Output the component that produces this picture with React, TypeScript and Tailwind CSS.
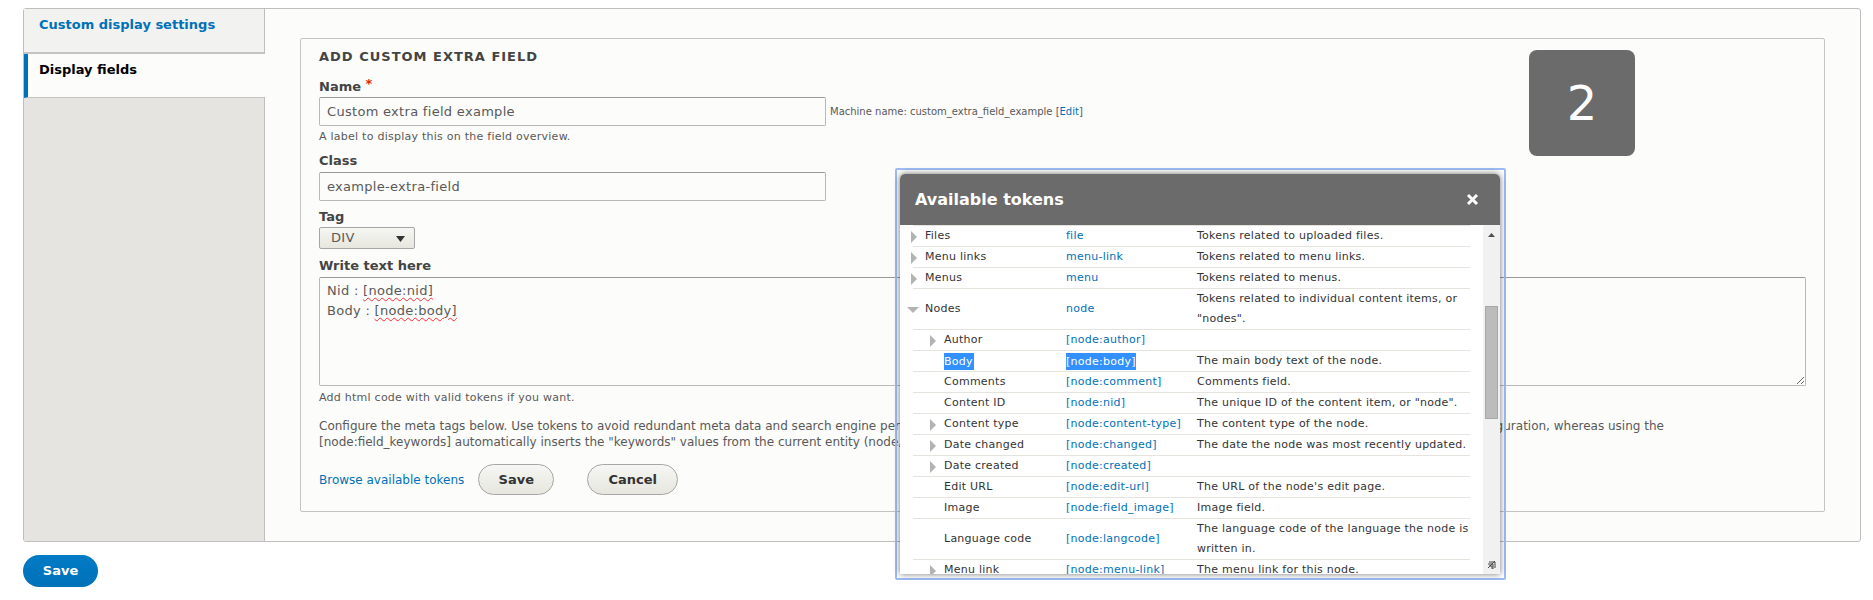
const FONT = 'font-["DejaVu_Sans",sans-serif]';

type TokenRow = {
  name: string;
  token: string;
  desc?: string;
  desc2?: string;
  nested?: boolean;
  arrow?: 'right' | 'down';
  selected?: boolean;
};

const rows: TokenRow[] = [
  { name: 'Files', token: 'file', desc: 'Tokens related to uploaded files.', arrow: 'right' },
  { name: 'Menu links', token: 'menu-link', desc: 'Tokens related to menu links.', arrow: 'right' },
  { name: 'Menus', token: 'menu', desc: 'Tokens related to menus.', arrow: 'right' },
  { name: 'Nodes', token: 'node', desc: 'Tokens related to individual content items, or', desc2: '"nodes".', arrow: 'down' },
  { name: 'Author', token: '[node:author]', nested: true, arrow: 'right' },
  { name: 'Body', token: '[node:body]', desc: 'The main body text of the node.', nested: true, selected: true },
  { name: 'Comments', token: '[node:comment]', desc: 'Comments field.', nested: true },
  { name: 'Content ID', token: '[node:nid]', desc: 'The unique ID of the content item, or "node".', nested: true },
  { name: 'Content type', token: '[node:content-type]', desc: 'The content type of the node.', nested: true, arrow: 'right' },
  { name: 'Date changed', token: '[node:changed]', desc: 'The date the node was most recently updated.', nested: true, arrow: 'right' },
  { name: 'Date created', token: '[node:created]', nested: true, arrow: 'right' },
  { name: 'Edit URL', token: '[node:edit-url]', desc: "The URL of the node's edit page.", nested: true },
  { name: 'Image', token: '[node:field_image]', desc: 'Image field.', nested: true },
  { name: 'Language code', token: '[node:langcode]', desc: 'The language code of the language the node is', desc2: 'written in.', nested: true },
  { name: 'Menu link', token: '[node:menu-link]', desc: 'The menu link for this node.', nested: true, arrow: 'right' },
];

function Arrow({ dir, nested }: { dir: 'right' | 'down'; nested?: boolean }) {
  if (dir === 'down') {
    return (
      <svg width="12" height="6" viewBox="0 0 12 6" className="absolute left-[-6px] top-[18px]">
        <path d="M0 0h12L6 6z" fill="#b3b3b3" />
      </svg>
    );
  }
  return (
    <svg width="6" height="12" viewBox="0 0 6 12" className={`absolute top-[5px] ${nested ? 'left-[17px]' : 'left-[-2px]'}`}>
      <path d="M0 0l6 6-6 6z" fill="#b3b3b3" />
    </svg>
  );
}

function Row({ row }: { row: TokenRow }) {
  const tall = !!row.desc2;
  return (
    <div className={`relative flex w-[557px] shrink-0 border-b border-[#e4e3de] text-[11px] tracking-[0.25px] ${tall ? 'h-[41px]' : 'h-[21px]'}`}>
      {row.arrow && <Arrow dir={row.arrow} nested={row.nested} />}
      <div className={`flex w-[153px] shrink-0 items-center ${row.nested ? 'pl-[31px]' : 'pl-[12px]'}`}>
        <span className={row.selected ? 'bg-[#3390ff] pr-[1px] leading-[17px] text-white' : 'text-[#333]'}>{row.name}</span>
      </div>
      <div className="flex w-[131px] shrink-0 items-center">
        <span className={row.selected ? 'bg-[#3390ff] leading-[17px] text-white' : 'text-[#0071b8]'}>{row.token}</span>
      </div>
      <div className="flex-1 self-center whitespace-nowrap leading-[20px] text-[#333]">
        {row.desc}
        {row.desc2 && <br />}
        {row.desc2}
      </div>
    </div>
  );
}

function Label({ children }: { children: React.ReactNode }) {
  return <div className="text-[13px] font-bold leading-[18px] text-[#444]">{children}</div>;
}

function Spell({ children }: { children: React.ReactNode }) {
  return <span className="underline decoration-red-500 decoration-wavy decoration-1 underline-offset-2">{children}</span>;
}

function TextInput({ value, className }: { value: string; className?: string }) {
  return (
    <input
      readOnly
      value={value}
      className={`h-[29px] w-[507px] rounded-[2px] border border-[#b8b8b8] border-t-[#999] bg-[#fcfcfa] px-[7px] text-[13px] tracking-[0.3px] text-[#595959] ${className ?? ''}`}
    />
  );
}

function GreyButton({ children, className }: { children: React.ReactNode; className?: string }) {
  return (
    <button className={`h-[31px] rounded-full border border-[#a6a6a6] bg-gradient-to-b from-[#f6f6f3] to-[#e7e7df] text-[13px] font-bold text-[#333] ${className ?? ''}`}>
      {children}
    </button>
  );
}

export default function App() {
  return (
    <div className={`relative h-[600px] w-[1873px] overflow-hidden bg-white pl-[23px] pt-[8px] ${FONT}`}>
      <div className="flex h-[534px] w-[1838px] rounded-[3px] border border-[#bfbebc] bg-[#fcfcfa]">
        {/* Vertical tabs */}
        <div className="w-[241px] shrink-0 rounded-l-[3px] border-r border-[#bfbebc] bg-[#e5e4e0]">
          <div className="h-[45px] border-b-2 border-[#c4c4c0] bg-[#f2f2f0] pl-[15px] pt-[7px] text-[13px] font-bold leading-[18px] text-[#0071b8]">
            Custom display settings
          </div>
          <div className="mr-[-1px] h-[44px] border-b border-[#c4c4c0] border-l-4 border-l-[#0071b8] bg-[#fcfcfa] pl-[11px] pt-[7px] text-[13px] font-bold leading-[18px] text-black">
            Display fields
          </div>
        </div>

        {/* Form */}
        <div className="flex-1 pl-[35px] pt-[29px]">
          <div className="h-[474px] w-[1525px] rounded-[2px] border border-[#c4c4c0] pl-[18px] pt-[10px]">
            <div className="text-[13px] font-bold uppercase leading-[16px] tracking-[1px] text-[#444]">Add custom extra field</div>
            <div className="mt-[13px]">
              <Label>
                Name <span className="relative top-[-3px] text-[#e32700]">*</span>
              </Label>
            </div>
            <div className="mt-[1px] flex items-center">
              <TextInput value="Custom extra field example" />
              <span className="ml-[4px] text-[10px] text-[#595959]">
                Machine name: custom_extra_field_example [<span className="text-[#0071b8]">Edit</span>]
              </span>
            </div>
            <div className="mt-[3px] text-[11px] leading-[16px] tracking-[0.25px] text-[#595959]">A label to display this on the field overview.</div>
            <div className="mt-[7px]">
              <Label>Class</Label>
            </div>
            <div className="mt-[2px]">
              <TextInput value="example-extra-field" />
            </div>
            <div className="mt-[7px]">
              <Label>Tag</Label>
            </div>
            <div className="relative mt-[1px] h-[22px] w-[96px] rounded-[2px] border border-[#a6a6a6] bg-gradient-to-b from-[#f6f6f3] to-[#e7e7df] pl-[11px] text-[13px] leading-[20px] tracking-[0.3px] text-[#595959]">
              DIV
              <svg width="9" height="6" viewBox="0 0 9 6" className="absolute right-[9px] top-[8px]">
                <path d="M0 0h9L4.5 6z" fill="#333" />
              </svg>
            </div>
            <div className="mt-[8px]">
              <Label>Write text here</Label>
            </div>
            <div className="mt-[2px] h-[109px] w-[1487px] resize overflow-auto rounded-[2px] border border-[#b8b8b8] border-t-[#999] bg-[#fcfcfa] px-[7px] pt-[3px] text-[13px] leading-[20px] tracking-[0.3px] text-[#595959]">
              Nid : <Spell>[node:nid]</Spell>
              <br />
              Body : <Spell>[node:body]</Spell>
            </div>
            <div className="mt-[4px] text-[11px] leading-[16px] tracking-[0.25px] text-[#595959]">Add html code with valid tokens if you want.</div>
            <div className="mt-[12px] whitespace-nowrap text-[12px] leading-[16px] text-[#595959]">
              Configure the meta tags below. Use tokens to avoid redundant meta data and search engine penalization. For example, a 'keyword' value of "example" will be shown on all content using this configuration, whereas using the
              <br />
              [node:field_keywords] automatically inserts the "keywords" values from the current entity (node, term, etc).
            </div>
            <div className="mt-[14px] flex items-center">
              <span className="text-[12px] text-[#0071b8]">Browse available tokens</span>
              <GreyButton className="ml-[14px] w-[76px]">Save</GreyButton>
              <GreyButton className="ml-[33px] w-[91px]">Cancel</GreyButton>
            </div>
          </div>
        </div>
      </div>

      <button className="mt-[13px] h-[32px] w-[75px] rounded-full bg-gradient-to-b from-[#007bc6] to-[#0071b8] text-[13px] font-bold text-white">Save</button>

      {/* Step badge */}
      <div className="absolute left-[1529px] top-[50px] flex h-[106px] w-[106px] items-center justify-center rounded-[8px] bg-[#6b6b6b] text-[48px] text-white">2</div>

      {/* Selection outline round the dialog */}
      <div className="absolute left-[895px] top-[168px] h-[412px] w-[611px] rounded-[2px] border-2 border-[#9dbcf5]" />

      {/* Token dialog */}
      <div className="absolute left-[900px] top-[174px] flex h-[400px] w-[600px] flex-col overflow-hidden rounded-t-[5px] bg-white shadow-[0_0_6px_rgba(0,0,0,0.55)]">
        <div className="flex h-[51px] shrink-0 items-center justify-between bg-[#6b6b6b] pl-[15px] pr-[21px]">
          <span className="text-[16px] font-bold text-white">Available tokens</span>
          <svg width="13" height="13" viewBox="0 0 13 13">
            <path d="M2 2l9 9M11 2l-9 9" stroke="#fff" strokeWidth="3" />
          </svg>
        </div>
        <div className="flex min-h-0 flex-1">
          <div className="min-w-0 flex-1 overflow-hidden pl-[13px]">
            <div className="h-[1px] w-[557px] bg-[#e4e3de]" />
            {rows.map((row) => (
              <Row key={row.name} row={row} />
            ))}
          </div>
          {/* Scrollbar */}
          <div className="relative w-[17px] shrink-0 bg-[#f1f1f1]">
            <svg width="7" height="4" viewBox="0 0 7 4" className="absolute left-[5px] top-[8px]">
              <path d="M0 4L3.500 0 7 4z" fill="#505050" />
            </svg>
            <div className="absolute left-[2px] top-[81px] h-[113px] w-[13px] border border-[#a8a8a8] bg-[#bcbcbc]" />
            <svg width="8" height="8" viewBox="0 0 8 8" className="absolute bottom-[5px] left-[5px]">
              <path d="M7 0L0 7M1 1h6v6M0 3h5M5 3v5M1 5h3v3" stroke="#444" fill="none" />
            </svg>
          </div>
        </div>
      </div>
    </div>
  );
}
